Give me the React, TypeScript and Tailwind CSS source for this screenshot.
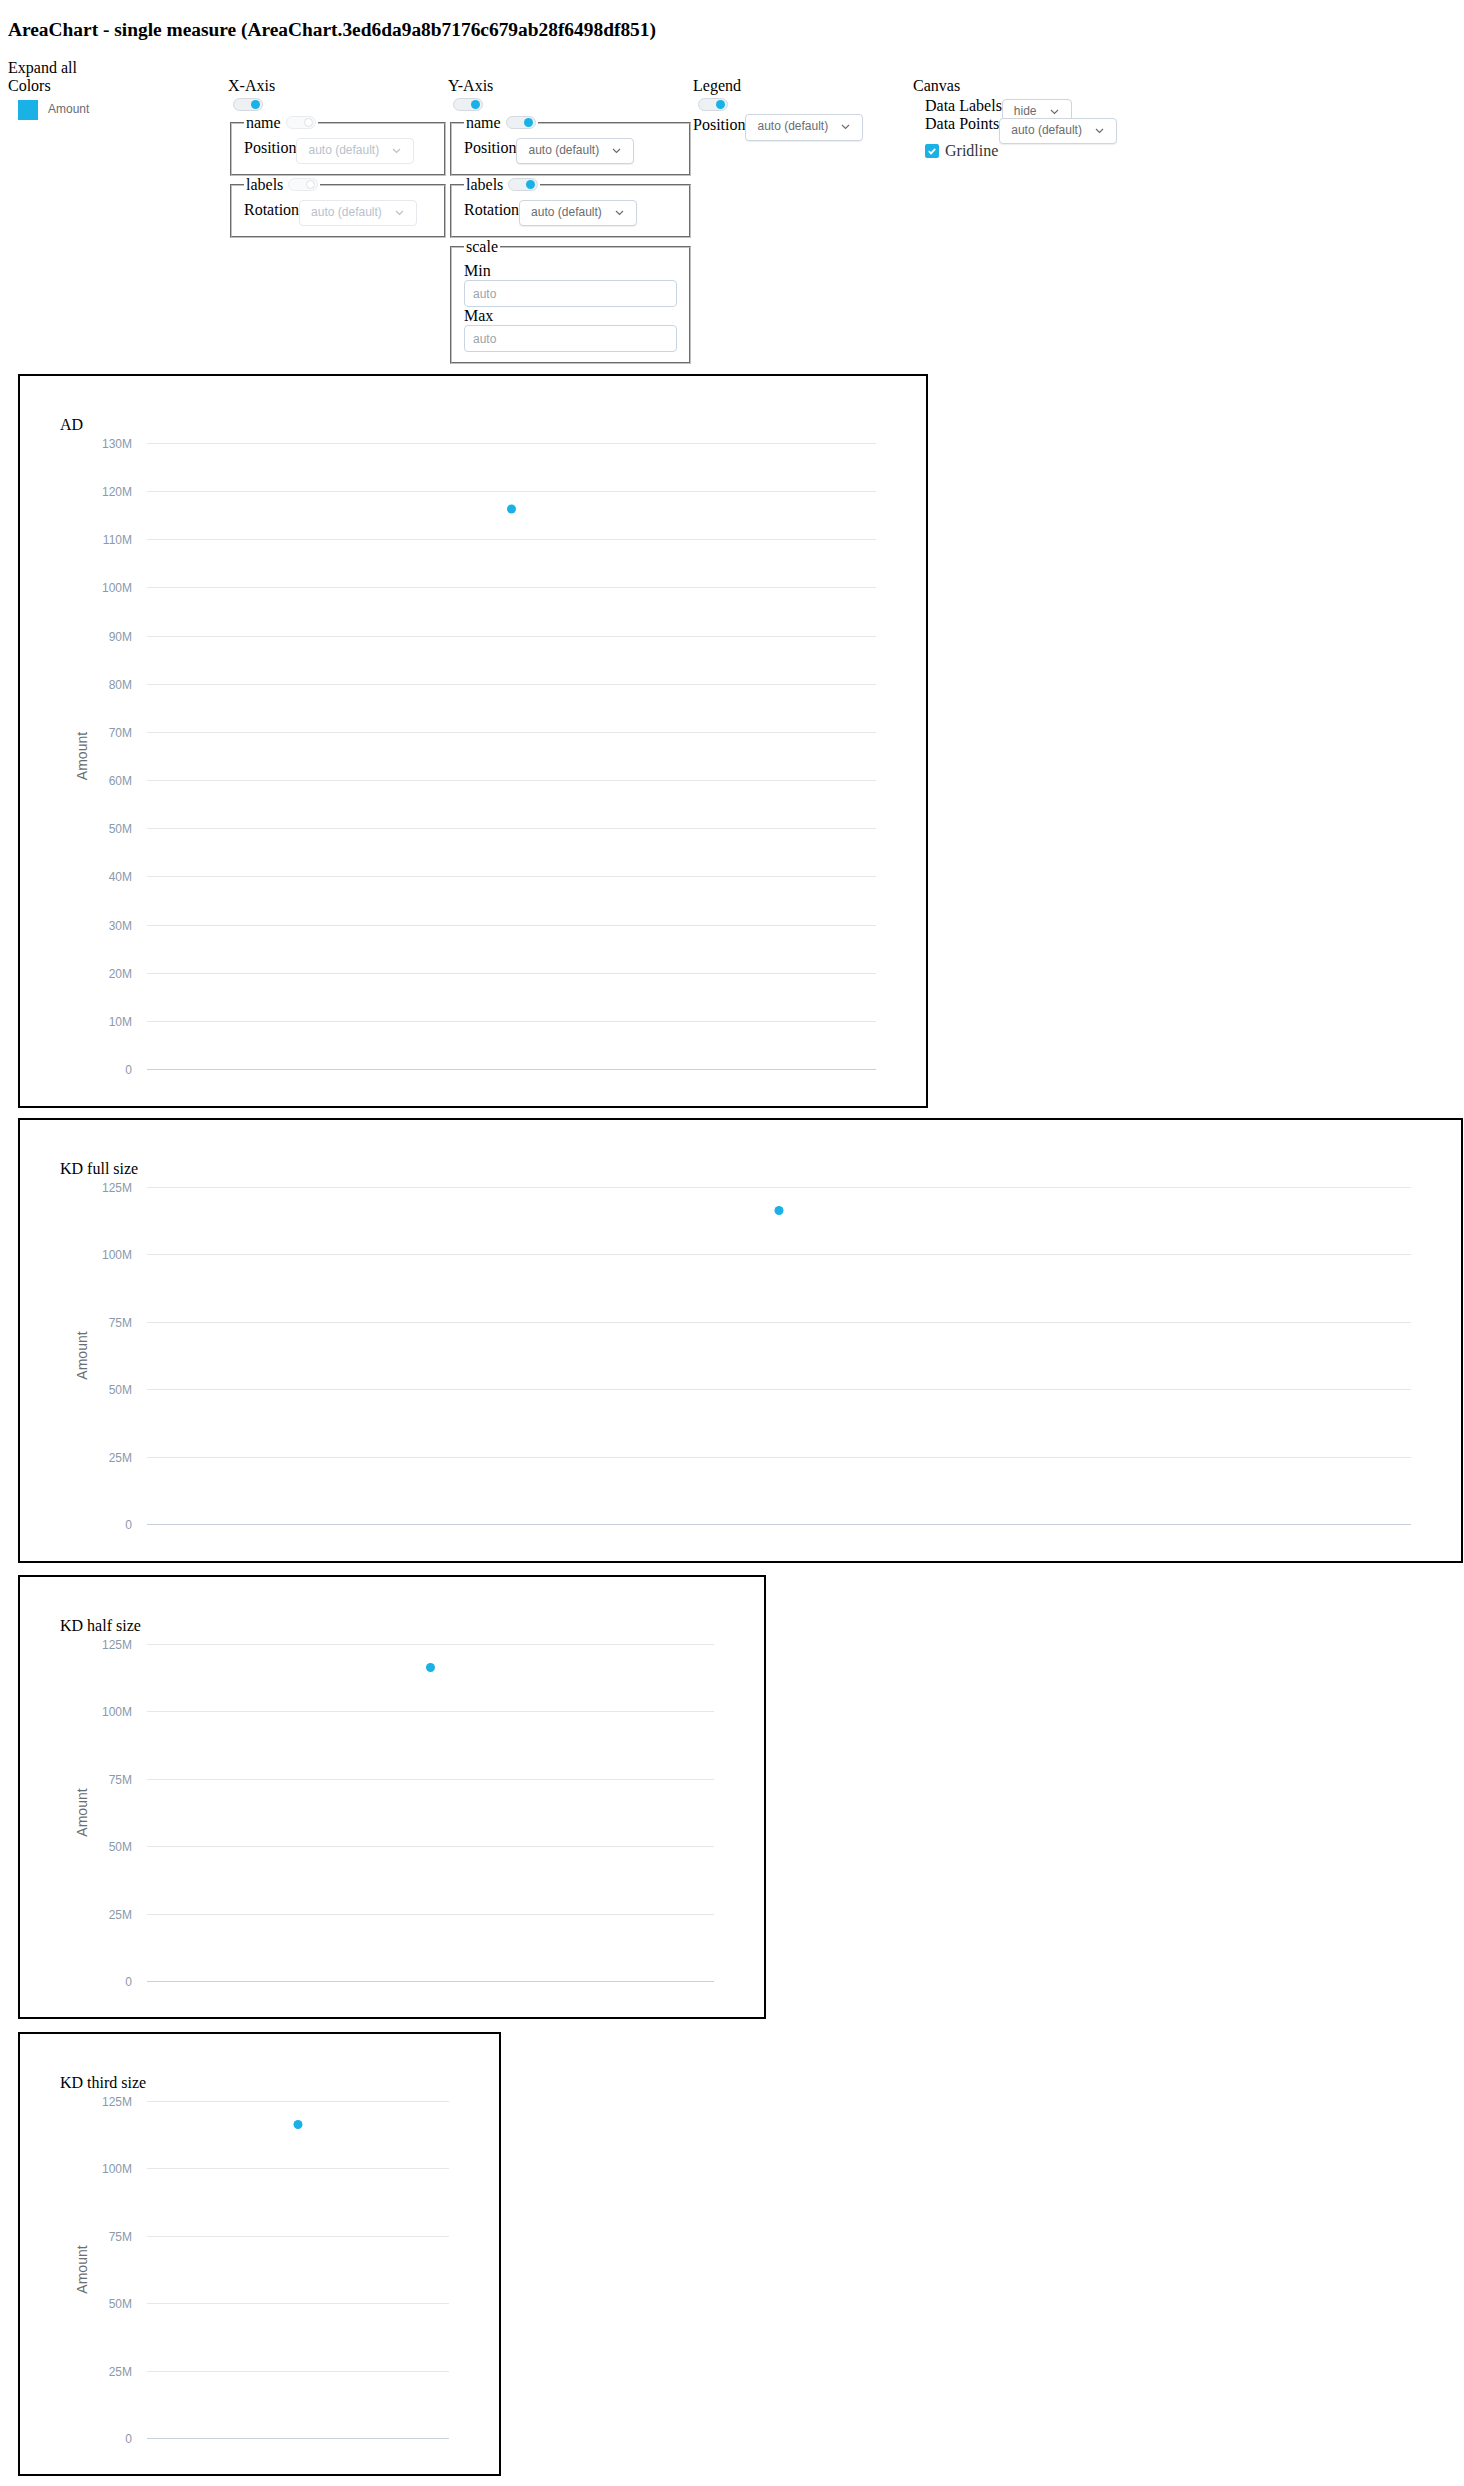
import React from 'react'

const CYAN = '#1ab1e6'

function Chevron() {
  return (
    <svg width="9" height="6" viewBox="0 0 9 6" className="shrink-0">
      <path d="M1 1l3.5 3.5L8 1" fill="none" stroke="currentColor" strokeWidth="1.2" />
    </svg>
  )
}

function Toggle({ faded = false }: { faded?: boolean }) {
  return (
    <span
      className={`inline-flex h-[13px] w-[30px] shrink-0 items-center justify-end rounded-full border px-[2px] ${
        faded ? 'border-[#e9ecef] bg-[#f9fafb]' : 'border-[#d3d9df] bg-[#eef1f4]'
      }`}
    >
      <span className={`h-[9px] w-[9px] rounded-full ${faded ? 'border border-[#dde2e6] bg-white' : 'bg-[#1ab1e6]'}`} />
    </span>
  )
}

function Select({ value, disabled = false, extra = '' }: { value: string; disabled?: boolean; extra?: string }) {
  return (
    <div
      className={`inline-flex h-[26px] shrink-0 items-center gap-[13px] rounded-[4px] border bg-white pl-[11px] pr-[12px] font-['Liberation_Sans',Arial,sans-serif] text-[12px] ${
        disabled
          ? 'border-[#e6eaee] text-[#b8c1cb]'
          : 'border-[#cdd6df] text-[#6a6d70] shadow-[0_1px_1px_rgba(0,0,0,0.07)]'
      } ${extra}`}
    >
      <span>{value}</span>
      <Chevron />
    </div>
  )
}

function Box({ legend, children }: { legend: React.ReactNode; children: React.ReactNode }) {
  return (
    <fieldset className="mx-[2px] border-2 border-[#c0c0c0] px-3 pt-[5.6px] pb-[10px] [border-style:groove]">
      <legend className="px-[2px]">{legend}</legend>
      {children}
    </fieldset>
  )
}

function Field({ label, value, disabled = false }: { label: string; value: string; disabled?: boolean }) {
  return (
    <div className="flex items-start">
      <span className="pt-[1px]">{label}</span>
      <Select value={value} disabled={disabled} />
    </div>
  )
}

function Chart({ title, frame, w, plotH, max, step }: { title: string; frame: string; w: number; plotH: number; max: number; step: number }) {
  const svgW = w - 84
  const ticks: number[] = []
  for (let v = 0; v <= max; v += step) ticks.push(v)
  const y = (v: number) => Math.round(9 + plotH * (1 - v / max)) + 0.5
  const x0 = 87
  const x1 = svgW - 10

  return (
    <div className={`ml-[10px] box-border border-2 border-black p-10 ${frame}`}>
      <div className="leading-[18px]">{title}</div>
      <svg width={svgW} height={plotH + 12} className="block overflow-visible font-['Liberation_Sans',Arial,sans-serif]">
        {ticks.map((v) => (
          <g key={v}>
            <line x1={x0} x2={x1} y1={y(v)} y2={y(v)} stroke={v === 0 ? '#c7d0db' : '#e7e7e7'} strokeWidth="1" />
            <text x={72} y={y(v) + 4} textAnchor="end" fontSize="12" fill="#8a99ab">
              {v === 0 ? '0' : `${v}M`}
            </text>
          </g>
        ))}
        <text transform={`translate(27 ${9 + plotH / 2}) rotate(-90)`} textAnchor="middle" fontSize="14" fill="#6a6d70">
          Amount
        </text>
        <circle cx={(x0 + x1) / 2} cy={9 + plotH * (1 - 116.3 / max)} r="4.5" fill={CYAN} />
      </svg>
    </div>
  )
}

export default function App() {
  return (
    <div className="m-2 font-['Liberation_Serif','Times_New_Roman',serif] text-[16px] leading-[1.15] text-black">
      <h3 className="my-[18.72px] text-[19.4px] leading-[21.5px] font-bold">
        AreaChart - single measure (AreaChart.3ed6da9a8b7176c679ab28f6498df851)
      </h3>
      <div>Expand all</div>

      {/* controls */}
      <div className="flex items-start">
        <div className="w-[220px] shrink-0">
          <div>Colors</div>
          <div className="mt-[4px] flex items-center gap-[10px] pl-[10px]">
            <span className="h-5 w-5 bg-[#1ab1e6]" />
            <span className="font-['Liberation_Sans',Arial,sans-serif] text-[12px] text-[#6a6d70]">Amount</span>
          </div>
        </div>

        <div className="w-[220px] shrink-0">
          <div>X-Axis</div>
          <div className="flex h-[18px] items-center pl-[5px]">
            <Toggle />
          </div>
          <Box
            legend={
              <span className="inline-flex items-center gap-[5px]">
                name <Toggle faded />
              </span>
            }
          >
            <Field label="Position" value="auto (default)" disabled />
          </Box>
          <Box
            legend={
              <span className="inline-flex items-center gap-[5px]">
                labels <Toggle faded />
              </span>
            }
          >
            <Field label="Rotation" value="auto (default)" disabled />
          </Box>
        </div>

        <div className="w-[245px] shrink-0">
          <div>Y-Axis</div>
          <div className="flex h-[18px] items-center pl-[5px]">
            <Toggle />
          </div>
          <Box
            legend={
              <span className="inline-flex items-center gap-[5px]">
                name <Toggle />
              </span>
            }
          >
            <Field label="Position" value="auto (default)" />
          </Box>
          <Box
            legend={
              <span className="inline-flex items-center gap-[5px]">
                labels <Toggle />
              </span>
            }
          >
            <Field label="Rotation" value="auto (default)" />
          </Box>
          <Box legend="scale">
            <div>Min</div>
            <input
              placeholder="auto"
              className="box-border block h-[27px] w-[213px] rounded-[4px] border border-[#c9d5e2] bg-white px-2 font-['Liberation_Sans',Arial,sans-serif] text-[12px] outline-none placeholder:text-[#9aa3ac]"
            />
            <div>Max</div>
            <input
              placeholder="auto"
              className="box-border block h-[27px] w-[213px] rounded-[4px] border border-[#c9d5e2] bg-white px-2 font-['Liberation_Sans',Arial,sans-serif] text-[12px] outline-none placeholder:text-[#9aa3ac]"
            />
          </Box>
        </div>

        <div className="w-[220px] shrink-0">
          <div>Legend</div>
          <div className="flex h-[18px] items-center pl-[5px]">
            <Toggle />
          </div>
          <div className="flex items-start">
            <span className="pt-[2px]">Position</span>
            <Select value="auto (default)" extra="h-[27px]" />
          </div>
        </div>

        <div className="w-[220px] shrink-0">
          <div>Canvas</div>
          <div className="pl-3">
            <div className="flex h-[18px] items-start pt-[1px]">
              <span>Data Labels</span>
              <Select value="hide" extra="mt-[2px]" />
            </div>
            <div className="flex h-[28px] items-start pt-[1px]">
              <span>Data Points</span>
              <Select value="auto (default)" extra="mt-[3px] h-[25px]" />
            </div>
            <div className="flex items-start gap-[6px]">
              <span className="mt-[2px] flex h-[14px] w-[14px] items-center justify-center rounded-[2px] bg-[#1ab1e6]">
                <svg width="10" height="10" viewBox="0 0 10 10">
                  <path d="M1.8 5.2l2.2 2.2 4.2-4.6" fill="none" stroke="white" strokeWidth="1.8" />
                </svg>
              </span>
              <span className="text-[#32363a]">Gridline</span>
            </div>
          </div>
        </div>
      </div>

      {/* charts */}
      <div className="mt-[10px]">
        <Chart title="AD" frame="w-[910px] h-[734px]" w={910} plotH={626} max={130} step={10} />
      </div>
      <div className="mt-[10px]">
        <Chart title="KD full size" frame="w-[1445px] h-[445px]" w={1445} plotH={337} max={125} step={25} />
      </div>
      <div className="mt-[12px]">
        <Chart title="KD half size" frame="w-[748px] h-[444px]" w={748} plotH={337} max={125} step={25} />
      </div>
      <div className="mt-[13px]">
        <Chart title="KD third size" frame="w-[483px] h-[444px]" w={483} plotH={337} max={125} step={25} />
      </div>
    </div>
  )
}
